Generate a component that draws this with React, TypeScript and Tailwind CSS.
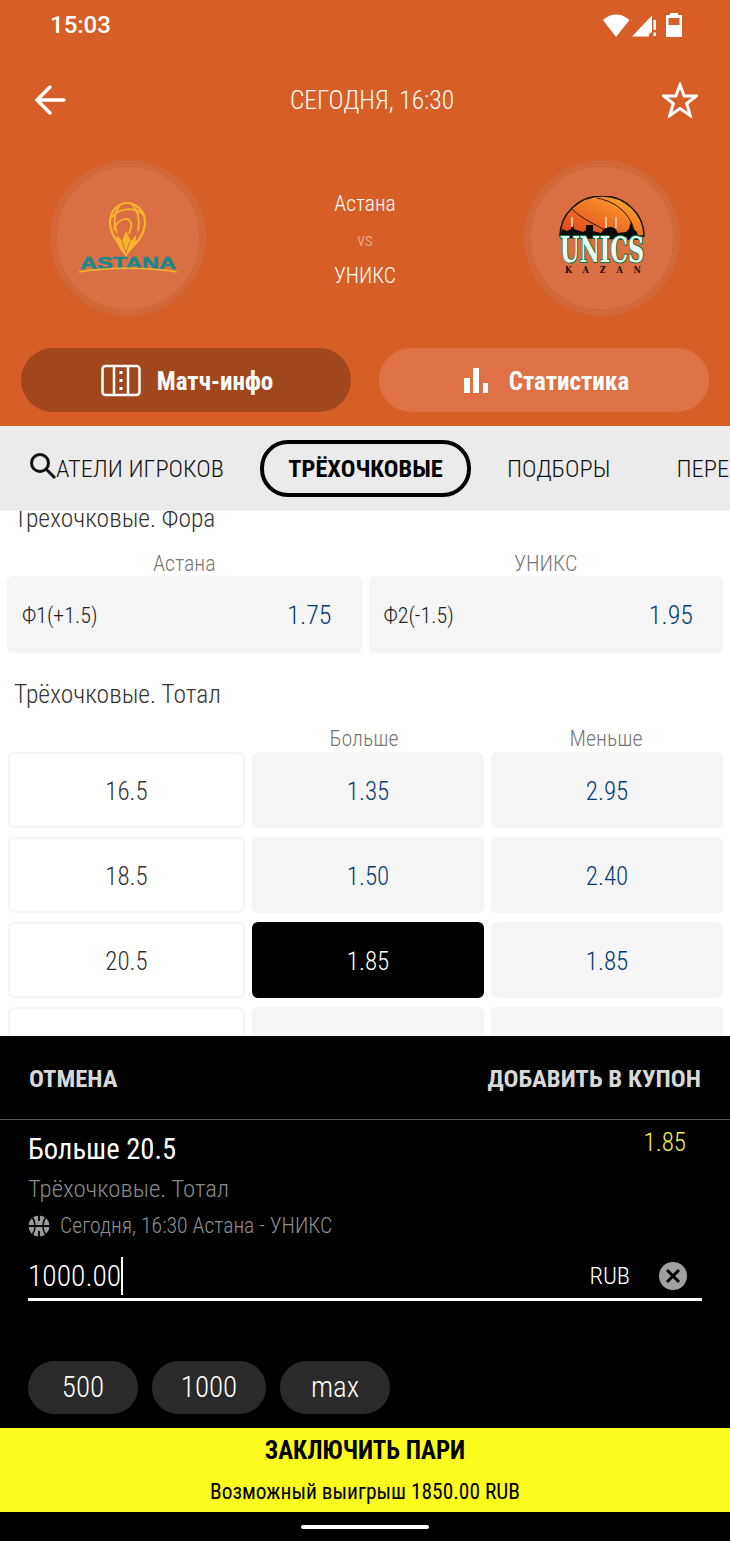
import React from 'react';

const cond = "font-['Roboto',sans-serif] [font-stretch:75%]";

const AstanaLogo = () => (
  <svg width="104" height="76" viewBox="0 0 104 76" fill="none">
    <g stroke="#f6b52f" strokeWidth="1.8">
      <path d="M50 55c-1-8-16-16-16-33C34 11 42 3 51 3s18 8 18 19c0 17-15 25-19 33z" strokeWidth="2.200" />
      <path d="M35 18c8-10 22-12 33-3M45 4c-7 8-8 18-4 29M56 4c7 8 8 17 6 27M38 30c2-9 12-14 16-9 3 4 0 9-1 13" />
      <path d="M50 56c-5-6-10-9-9-21l5 6 4-10 5 10 5-6c1 11-6 15-10 21z" fill="#f6b52f" stroke="none" />
      <path d="M46 41l4 12 4-12" stroke="#d96f42" strokeWidth="1" />
    </g>
    <text x="52" y="69" textAnchor="middle" fill="#17898f" stroke="#17898f" strokeWidth="0.500" fontFamily="Liberation Sans, sans-serif" fontWeight="700" fontSize="17" textLength="96" lengthAdjust="spacingAndGlyphs">ASTANA</text>
    <path d="M3 72c30-5 68-5 98 0" stroke="#f6b52f" strokeWidth="1.400" />
  </svg>
);

const UnicsLogo = () => (
  <svg width="90" height="84" viewBox="0 0 90 84" fill="none">
    <defs>
      <linearGradient id="ball" x1="0" y1="1" x2="1" y2="0">
        <stop offset="0" stopColor="#e23a1b" />
        <stop offset="1" stopColor="#fdb22e" />
      </linearGradient>
    </defs>
    <path d="M3 40a42 40 0 0 1 84 0z" fill="url(#ball)" stroke="#111" strokeWidth="1.500" />
    <path d="M15 13c10 11 36 22 55 32M40 2c20 4 34 16 38 36" stroke="#2a1408" strokeWidth="1" />
    <path d="M3 42l2-9 5 2 4-2 1-10 2 10 9 3 3-2v-5h7v6l8 2c2-4 5-6 9-6s6 2 8 6l8-1 3-3 2-8 2 8 4 3 2 8z" fill="#0a0a0a" />
    <path d="M49 21v11M59 21v11M15 21v10" stroke="#f1bf97" strokeWidth="2" />
    <text x="45" y="66" textAnchor="middle" fill="#e9fff3" stroke="#08733f" strokeWidth="2" paintOrder="stroke" fontFamily="DejaVu Serif, serif" fontWeight="700" fontSize="35" textLength="84" lengthAdjust="spacingAndGlyphs">UNICS</text>
    <text x="46" y="77" textAnchor="middle" fill="#1a1008" fontFamily="DejaVu Serif, serif" fontWeight="700" fontSize="9" textLength="76">KAZAN</text>
  </svg>
);

const TeamBadge = ({ children }: { children: React.ReactNode }) => (
  <div className="w-[156px] h-[156px] rounded-full bg-[#d96f42] border-[7px] border-[#d2683a] flex items-center justify-center">
    {children}
  </div>
);

const OddCell = ({ value, selected }: { value: string; selected?: boolean }) => (
  <div className={`h-[76px] pt-[3px] rounded-md flex items-center justify-center text-[25px] ${selected ? 'bg-black text-white' : 'bg-[#f5f5f5] text-[#063b73]'}`}>
    {value}
  </div>
);

const rows = [
  { total: '16.5', over: '1.35', under: '2.95' },
  { total: '18.5', over: '1.50', under: '2.40' },
  { total: '20.5', over: '1.85', under: '1.85', selected: true },
  { total: '', over: '', under: '' },
];

export default function App() {
  return (
    <div className={`w-[730px] h-[1541px] overflow-hidden flex flex-col bg-white ${cond}`}>
      {/* Header */}
      <header className="h-[426px] shrink-0 bg-[#d75e27] text-white flex flex-col">
        <div className="h-[50px] pl-[50px] pr-[47px] flex items-center justify-between">
          <span className="font-['Roboto',sans-serif] [font-stretch:100%] text-[24px] font-medium">15:03</span>
          <svg width="82" height="26" viewBox="0 0 82 26" fill="#fff">
            <path d="M2 8C9 .5 21 .5 28.500 8L15 25z" />
            <path d="M31 24.500L51 3.500v16.500l-3 2v2.500z" />
            <path d="M52.500 8h2.500v10h-2.500zM52.500 20.500h2.500v3.500h-2.500z" />
            <path d="M66 3h3V1h8v2h3a1 1 0 0 1 1 1v20a1 1 0 0 1-1 1H66a1 1 0 0 1-1-1V4a1 1 0 0 1 1-1z" />
            <rect x="67.500" y="6" width="11" height="7" fill="#d75e27" />
          </svg>
        </div>

        <div className="h-[100px] pl-[34px] pr-[32px] flex items-center justify-between">
          <svg width="32" height="32" viewBox="0 0 32 32" fill="none" stroke="#fff" strokeWidth="3.500" strokeLinecap="round">
            <path d="M30 16H4M16 3L3 16l13 13" />
          </svg>
          <span className="text-[25.500px] font-light ml-[16px] pt-[1px]">СЕГОДНЯ, 16:30</span>
          <svg width="36" height="36" viewBox="0 0 36 36" fill="none" stroke="#fff" strokeWidth="3" strokeLinejoin="miter">
            <path d="M18 3l4.200 11h12l-9.500 7.500 3.500 12L18 26.500 7.800 33.500l3.500-12L1.800 14h12z" />
          </svg>
        </div>

        <div className="h-[156px] mt-[10px] px-[50px] flex items-center justify-between">
          <TeamBadge><AstanaLogo /></TeamBadge>
          <div className="flex flex-col items-center text-[21.500px] font-light leading-none pt-[3px]">
            <span className="h-[26px] flex items-center">Астана</span>
            <span className="h-[46px] flex items-center text-[18px] text-[#eeb79c]">vs</span>
            <span className="h-[26px] flex items-center">УНИКС</span>
          </div>
          <TeamBadge><UnicsLogo /></TeamBadge>
        </div>

        <div className="mt-[32px] px-[21px] flex gap-[28px]">
          <div className="w-[330px] h-[64px] pl-[2px] rounded-full bg-[#a1471e] flex items-center justify-center gap-[16px]">
            <svg width="40" height="33" viewBox="0 0 40 33" fill="none" stroke="#fff" strokeWidth="2.500">
              <rect x="1.500" y="2" width="37" height="29" rx="3" />
              <path d="M13 2v29M27 2v29" />
              <path d="M20 7v3M20 15v3M20 23v3" strokeWidth="3" />
            </svg>
            <span className="text-[25px] font-bold pt-[3px]">Матч-инфо</span>
          </div>
          <div className="w-[330px] h-[64px] rounded-full bg-[#df7146] flex items-center justify-center gap-[20px] pl-[5px]">
            <svg width="25" height="25" viewBox="0 0 25 25" fill="#fff">
              <rect x="0" y="10" width="6" height="15" />
              <rect x="9" y="0" width="6" height="25" />
              <rect x="19" y="15" width="5" height="10" />
            </svg>
            <span className="text-[25px] font-bold pt-[3px]">Статистика</span>
          </div>
        </div>
      </header>

      {/* Tabs */}
      <nav className="h-[85px] shrink-0 bg-[#ebebeb] flex items-center overflow-hidden text-[24.500px] font-light text-[#111] whitespace-nowrap">
        <div className="relative w-[260px] shrink-0 flex justify-start pl-[56px] overflow-hidden pt-[2px]">
          <span>АТЕЛИ ИГРОКОВ</span>
          <svg className="absolute left-[28px] top-[2px]" width="30" height="30" viewBox="0 0 30 30" fill="none" stroke="#111" strokeWidth="3">
            <circle cx="12" cy="12" r="8.500" />
            <path d="M18 18l9 9" />
          </svg>
        </div>
        <div className="w-[211px] h-[57px] shrink-0 rounded-[28px] border-[4px] border-black flex items-center justify-center font-bold text-[24.400px] text-black pt-[1px]">
          ТРЁХОЧКОВЫЕ
        </div>
        <span className="ml-[36px] pt-[2px]">ПОДБОРЫ</span>
        <span className="ml-[66px] pt-[2px]">ПЕРЕХВАТЫ</span>
      </nav>

      {/* Markets */}
      <main className="h-[525px] shrink-0 overflow-hidden px-[7px] text-[#333]">
        <h2 className="-mt-[8px] pl-[7px] h-[30px] flex items-center text-[25.500px] font-light">Трёхочковые. Фора</h2>
        <div className="mt-[13px] grid grid-cols-2 gap-[7px]">
          <div>
            <div className="h-[30px] pt-[4px] flex items-center justify-center text-[22px] font-light text-[#777]">Астана</div>
            <div className="h-[77px] pt-[2px] rounded-md bg-[#f5f5f5] pl-[15px] pr-[30px] flex items-center justify-between">
              <span className="text-[22px] font-light text-[#222]">Ф1(+1.5)</span>
              <span className="text-[26px] font-light text-[#063b73]">1.75</span>
            </div>
          </div>
          <div>
            <div className="h-[30px] pt-[4px] flex items-center justify-center text-[22px] font-light text-[#777]">УНИКС</div>
            <div className="h-[77px] pt-[2px] rounded-md bg-[#f5f5f5] pl-[15px] pr-[30px] flex items-center justify-between">
              <span className="text-[22px] font-light text-[#222]">Ф2(-1.5)</span>
              <span className="text-[26px] font-light text-[#063b73]">1.95</span>
            </div>
          </div>
        </div>

        <h2 className="mt-[26px] pl-[7px] h-[30px] flex items-center text-[25.500px] font-light">Трёхочковые. Тотал</h2>
        <div className="mt-[14px] grid grid-cols-[237px_232px_232px] gap-x-[7px] text-[22px] font-light text-[#777]">
          <div />
          <div className="h-[30px] pr-[6px] flex items-center justify-center">Больше</div>
          <div className="h-[30px] flex items-center justify-center">Меньше</div>
        </div>
        <div className="-mt-[1px] flex flex-col gap-[9px]">
          {rows.map((row, i) => (
            <div key={i} className="grid grid-cols-[237px_232px_232px] gap-x-[7px] pl-[1px] font-light">
              <div className="h-[76px] pt-[3px] rounded-md bg-white border-2 border-[#f5f5f5] flex items-center justify-center text-[25px] text-[#333]">
                {row.total}
              </div>
              <OddCell value={row.over} selected={row.selected} />
              <OddCell value={row.under} />
            </div>
          ))}
        </div>
      </main>

      {/* Bet slip */}
      <section className="flex-1 bg-black text-white flex flex-col">
        <div className="h-[84px] shrink-0 px-[29px] pt-[2px] flex items-center justify-between text-[24.800px] font-bold text-[#d8d8d8] border-b border-[#555]">
          <span>ОТМЕНА</span>
          <span>ДОБАВИТЬ В КУПОН</span>
        </div>
        <div className="px-[28px]">
          <div className="relative h-[56px] pt-[2px] flex items-center text-[28.600px] font-normal">
            Больше 20.5
            <span className="absolute right-[16px] top-[4px] text-[25px] font-light text-[#f3f04a]">1.85</span>
          </div>
          <div className="h-[27px] -mt-[1px] flex items-center text-[24.800px] font-light text-[#8a8a8a]">Трёхочковые. Тотал</div>
          <div className="mt-[11px] h-[26px] flex items-center gap-[10px] text-[21.700px] font-light text-[#8f8f8f]">
            <svg width="22" height="22" viewBox="0 0 22 22" fill="#9a9a9a" stroke="#000" strokeWidth="1.400">
              <circle cx="11" cy="11" r="10.500" stroke="none" />
              <path d="M0 11h22M11 0v6M11 16v6" strokeWidth="1.800" />
              <path d="M4 2c4 5 4 13 0 18M18 2c-4 5-4 13 0 18" fill="none" />
            </svg>
            Сегодня, 16:30 Астана - УНИКС
          </div>
          <div className="mt-[14px] h-[48px] pt-[1px] border-b-[3px] border-white flex items-center text-[29.500px] font-light">
            <span>1000.00</span>
            <span className="w-[2px] h-[38px] bg-white" />
            <span className="ml-auto text-[24.500px] font-light">RUB</span>
            <span className="ml-[29px] w-[28px] h-[28px] mr-[15px] rounded-full bg-[#a0a0a0] flex items-center justify-center">
              <svg width="16" height="16" viewBox="0 0 16 16" stroke="#000" strokeWidth="3"><path d="M2 2l12 12M14 2L2 14" /></svg>
            </span>
          </div>
          <div className="mt-[60px] flex gap-[14px] text-[29px] font-light">
            <div className="w-[110px] h-[53px] pt-[1px] rounded-full bg-[#2a2a2a] flex items-center justify-center">500</div>
            <div className="w-[114px] h-[53px] pt-[1px] rounded-full bg-[#2a2a2a] flex items-center justify-center">1000</div>
            <div className="w-[110px] h-[53px] pt-[1px] rounded-full bg-[#2a2a2a] flex items-center justify-center">max</div>
          </div>
        </div>
        <div className="mt-[14px] h-[84px] shrink-0 bg-[#fbfb1e] text-black flex flex-col items-center">
          <div className="h-[45px] flex items-center text-[24.900px] font-bold">ЗАКЛЮЧИТЬ ПАРИ</div>
          <div className="h-[40px] flex items-center text-[21.400px]">Возможный выигрыш 1850.00 RUB</div>
        </div>
        <div className="flex-1 flex items-center justify-center">
          <div className="w-[128px] h-[4px] rounded-full bg-white" />
        </div>
      </section>
    </div>
  );
}
